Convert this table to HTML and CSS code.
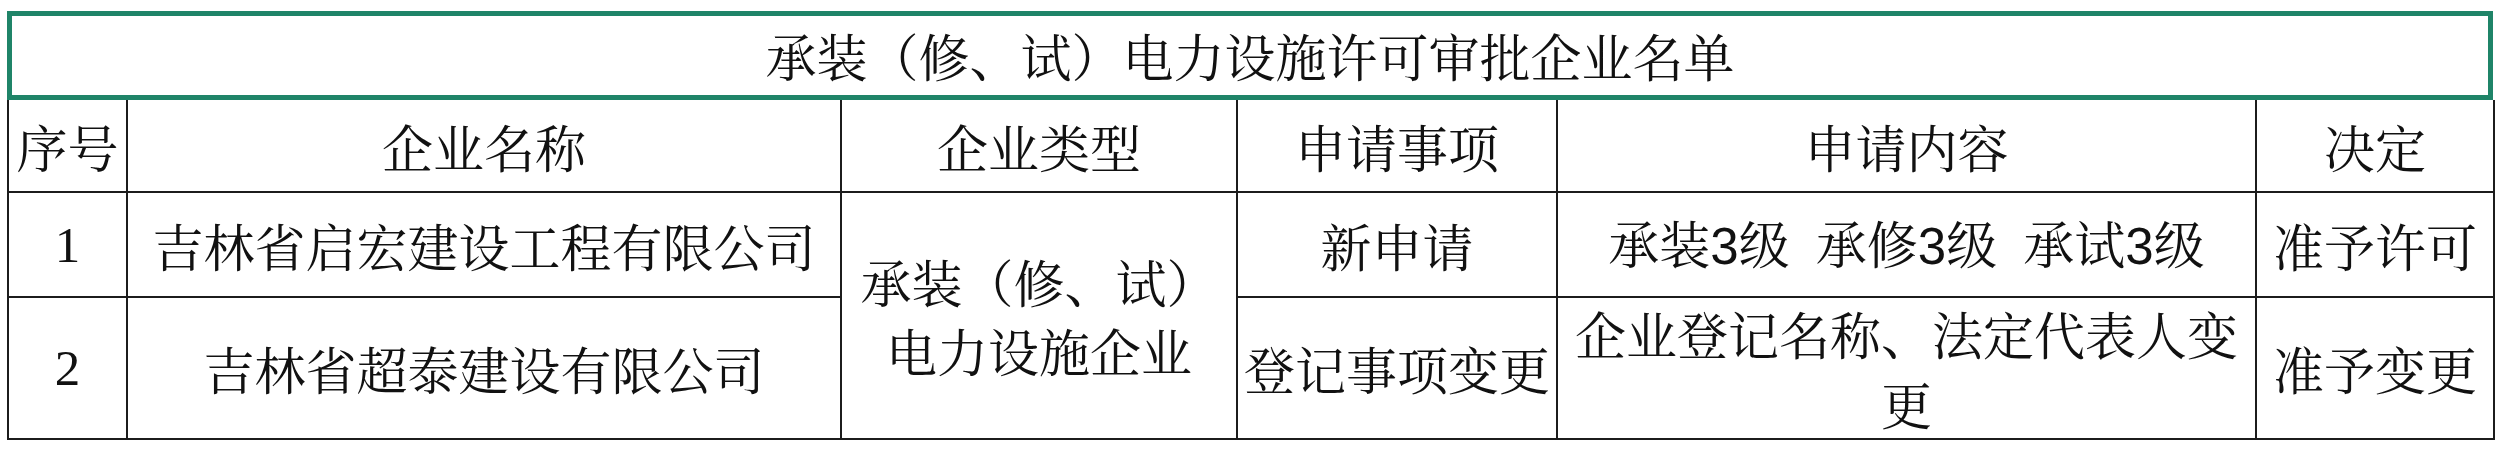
FILE: index.html
```html
<!DOCTYPE html>
<html lang="zh-CN">
<head>
<meta charset="utf-8">
<title>承装（修、试）电力设施许可审批企业名单</title>
<link rel="stylesheet" href="styles.css">
</head>
<body>
<div class="sheet">
  <div class="title">承装（修、试）电力设施许可审批企业名单</div>
  <table class="list">
    <colgroup>
      <col class="c-no">
      <col class="c-name">
      <col class="c-type">
      <col class="c-item">
      <col class="c-content">
      <col class="c-decision">
    </colgroup>
    <thead>
      <tr class="r-head">
        <th>序号</th>
        <th>企业名称</th>
        <th>企业类型</th>
        <th>申请事项</th>
        <th>申请内容</th>
        <th>决定</th>
      </tr>
    </thead>
    <tbody>
      <tr class="r-one">
        <td class="num">1</td>
        <td>吉林省启宏建设工程有限公司</td>
        <td rowspan="2" class="type">承装（修、试）<br>电力设施企业</td>
        <td>新申请</td>
        <td class="levels">承装<span class="digit">3</span>级&nbsp;&nbsp;承修<span class="digit">3</span>级&nbsp;&nbsp;承试<span class="digit">3</span>级</td>
        <td>准予许可</td>
      </tr>
      <tr class="r-two">
        <td class="num">2</td>
        <td>吉林省超泰建设有限公司</td>
        <td>登记事项变更</td>
        <td class="wrap">企业登记名称、法定代表人变更</td>
        <td>准予变更</td>
      </tr>
    </tbody>
  </table>
</div>
</body>
</html>
```
FILE: styles.css
```css
html, body {
  margin: 0;
  padding: 0;
  background: #ffffff;
}

body {
  font-family: "Noto Serif CJK SC", "Liberation Serif", "Noto Sans CJK SC", serif;
  color: #111111;
}

.sheet {
  padding: 11px 0 0 7px;
  width: 2486px;
}

.title {
  box-sizing: border-box;
  width: 2486px;
  height: 89px;
  border: 5px solid #1f8468;
  font-size: 51px;
  line-height: 79px;
  text-align: center;
  letter-spacing: 0;
}

.list {
  border-collapse: collapse;
  table-layout: fixed;
  width: 2486px;
  font-size: 51px;
}

.c-no { width: 119px; }
.c-name { width: 714px; }
.c-type { width: 396px; }
.c-item { width: 320px; }
.c-content { width: 699px; }
.c-decision { width: 238px; }

.list th,
.list td {
  border: 2px solid #1c1c1c;
  padding: 0;
  text-align: center;
  vertical-align: middle;
  font-weight: normal;
  line-height: 60px;
  white-space: nowrap;
  overflow: visible;
}

.list th {
  border-top: 0;
}

.r-head { height: 92px; }
.r-one { height: 105px; }
.r-two { height: 136px; }

.num {
  font-family: "Liberation Serif", serif;
}

.digit {
  font-family: "Liberation Sans", sans-serif;
}

.list td.type {
  line-height: 69px;
  white-space: normal;
}

.list td.wrap {
  white-space: normal;
  line-height: 70px;
  padding: 0 4px;
}
```
